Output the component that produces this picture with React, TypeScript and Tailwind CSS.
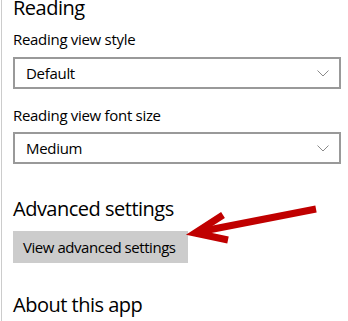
import React from "react";

const font = { fontFamily: '"Open Sans", "Noto Sans", Arial, sans-serif' };

function Chevron() {
  return (
    <svg width="12" height="7" viewBox="0 0 12 7" className="shrink-0">
      <path d="M0.5 0.5 L6 6 L11.5 0.5" fill="none" stroke="#8a8a8a" strokeWidth="1" />
    </svg>
  );
}

function Select({ value, className = "" }: { value: string; className?: string }) {
  return (
    <div
      className={`flex h-[32px] w-[328px] items-center justify-between border-2 border-[#999999] bg-white pl-[11px] pr-[10px] ${className}`}
    >
      <span className="text-[15px] leading-[20px] tracking-[-0.3px] text-black">{value}</span>
      <Chevron />
    </div>
  );
}

export default function App() {
  return (
    <div className="relative h-[321px] w-[348px] overflow-hidden bg-white" style={font}>
      <div className="ml-[1px] flex h-full flex-col border-l border-[#cccccc] pl-[11px]">
        <div className="mt-[-4px] whitespace-nowrap text-[20px] leading-[24px] tracking-[-0.5px] text-black">Reading</div>
        <div className="mt-[9px] whitespace-nowrap text-[15px] leading-[20px] tracking-[-0.3px] text-black">Reading view style</div>
        <Select value="Default" className="mt-[8px]" />
        <div className="mt-[16px] whitespace-nowrap text-[15px] leading-[20px] tracking-[-0.3px] text-black">Reading view font size</div>
        <Select value="Medium" className="mt-[7px]" />
        <div className="mt-[33px] whitespace-nowrap text-[20px] leading-[24px] tracking-[-0.5px] text-black">Advanced settings</div>
        <div className="mt-[10px] flex h-[32px] w-[175px] items-center whitespace-nowrap bg-[#cccccc] px-[10px] text-[15px] leading-[20px] tracking-[-0.45px] text-black">
          View advanced settings
        </div>
        <div className="mt-[30px] whitespace-nowrap text-[20px] leading-[24px] tracking-[-0.5px] text-black">About this app</div>
      </div>
      <svg
        className="pointer-events-none absolute left-0 top-0"
        width="348"
        height="321"
        viewBox="0 0 348 321"
      >
        <line x1="198" y1="232" x2="316" y2="209" stroke="#c00000" strokeWidth="7" />
        <polyline
          points="223,215 195,233 228,240"
          fill="none"
          stroke="#c00000"
          strokeWidth="7"
          strokeLinejoin="miter"
        />
      </svg>
    </div>
  );
}
